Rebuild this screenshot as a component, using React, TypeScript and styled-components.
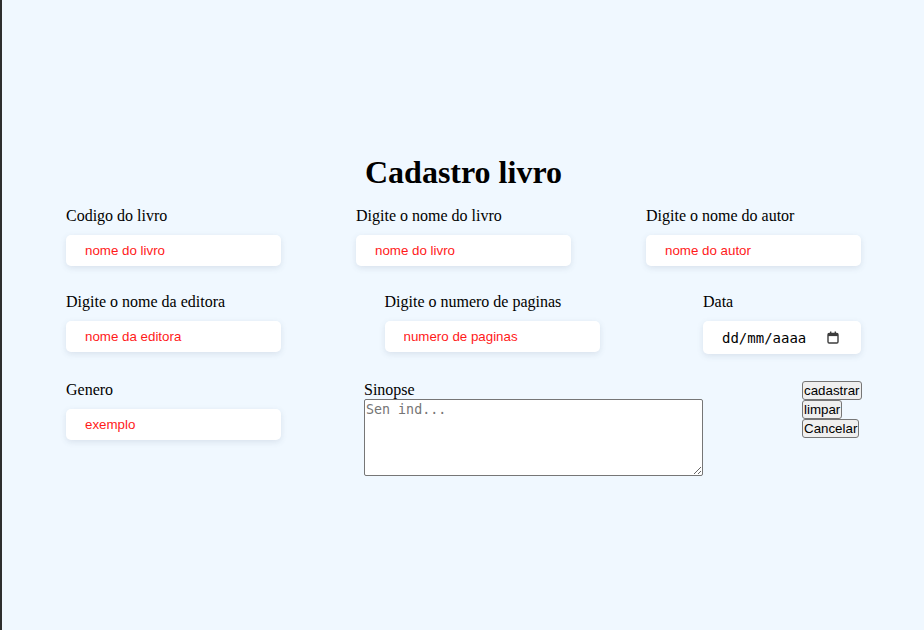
import styled, { createGlobalStyle } from 'styled-components';

const GlobalStyle = createGlobalStyle`
  html, body {
    margin: 0;
    padding: 0;
    background-color: #f0f8ff;
  }
`;

// Page wrapper with the dark window edge on the left
const Page = styled.div`
  min-height: 100vh;
  border-left: 2px solid #2e2e2e;
  box-sizing: border-box;
  padding-top: 154px;
  font-family: "Liberation Serif", "Times New Roman", serif;
  color: #000;
`;

const Form = styled.form`
  width: 795px;
  margin-left: 64px;
  display: flex;
  flex-direction: column;
  gap: 26px;
`;

const Title = styled.h1`
  margin: 0 0 -11px;
  text-align: center;
  font-size: 32px;
  line-height: 37px;
  font-weight: bold;
`;

const Row = styled.div`
  display: flex;
  justify-content: space-between;
  align-items: flex-start;
`;

const Field = styled.div<{ $width?: number }>`
  display: flex;
  flex-direction: column;
  width: ${(p) => p.$width ?? 215}px;
`;

const Label = styled.label<{ $gap?: number }>`
  font-size: 16px;
  line-height: 18px;
  padding-top: 1px;
  margin-bottom: ${(p) => p.$gap ?? 10}px;
  white-space: nowrap;
`;

// Styled text input
const TextInput = styled.input`
  box-sizing: border-box;
  width: 100%;
  height: 31px;
  border: none;
  border-radius: 5px;
  background: #fff;
  box-shadow: 0 2px 6px rgba(70, 90, 120, 0.14);
  padding: 0 19px;
  font-family: "Liberation Sans", Arial, sans-serif;
  font-size: 13.33px;
  color: #000;
  outline: none;

  &::placeholder {
    color: #ff1a1a;
  }
`;

// Fake date field so it reads dd/mm/aaaa whatever the locale
const DateBox = styled.div`
  box-sizing: border-box;
  width: 158px;
  height: 33px;
  border-radius: 5px;
  background: #fff;
  box-shadow: 0 2px 6px rgba(70, 90, 120, 0.14);
  display: flex;
  align-items: center;
  justify-content: space-between;
  padding: 0 22px 0 19px;
  font-family: "DejaVu Sans Mono", "Liberation Mono", monospace;
  font-size: 14px;
  color: #000;
`;

const TextArea = styled.textarea`
  box-sizing: border-box;
  width: 339px;
  height: 77px;
  border: 1px solid #767676;
  border-radius: 2px;
  background: #fff;
  padding: 2px 1px;
  font-family: "DejaVu Sans Mono", monospace;
  font-size: 13.33px;

  &::placeholder {
    color: #757575;
  }
`;

const Buttons = styled.div`
  display: flex;
  flex-direction: column;
  align-items: flex-start;
  width: 59px;
  padding-top: 1px;
`;

const Button = styled.button`
  box-sizing: border-box;
  height: 19px;
  padding: 0 1px;
  border: 1px solid #767676;
  border-radius: 3px;
  background: #efefef;
  font-family: "Liberation Sans", Arial, sans-serif;
  font-size: 13.33px;
  line-height: 15px;
  color: #000;
  white-space: nowrap;
`;

function CalendarIcon() {
  return (
    <svg width="12" height="13" viewBox="0 0 12 13">
      <rect x="1" y="2.5" width="10" height="9.5" rx="1.2" fill="none" stroke="#3c3c3c" strokeWidth="1.4" />
      <rect x="1" y="2.5" width="10" height="2.6" fill="#3c3c3c" />
      <rect x="3" y="0.5" width="1.4" height="2.5" fill="#3c3c3c" />
      <rect x="7.6" y="0.5" width="1.4" height="2.5" fill="#3c3c3c" />
    </svg>
  );
}

export default function App() {
  return (
    <Page>
      <GlobalStyle />
      <Form onSubmit={(e) => e.preventDefault()}>
        <Title>Cadastro livro</Title>
        <Row>
          <Field>
            <Label>Codigo do livro</Label>
            <TextInput placeholder="nome do livro" />
          </Field>
          <Field>
            <Label>Digite o nome do livro</Label>
            <TextInput placeholder="nome do livro" />
          </Field>
          <Field>
            <Label>Digite o nome do autor</Label>
            <TextInput placeholder="nome do autor" />
          </Field>
        </Row>
        <Row>
          <Field>
            <Label>Digite o nome da editora</Label>
            <TextInput placeholder="nome da editora" />
          </Field>
          <Field>
            <Label>Digite o numero de paginas</Label>
            <TextInput placeholder="numero de paginas" />
          </Field>
          <Field $width={158}>
            <Label>Data</Label>
            <DateBox>
              <span>dd/mm/aaaa</span>
              <CalendarIcon />
            </DateBox>
          </Field>
        </Row>
        <Row>
          <Field>
            <Label>Genero</Label>
            <TextInput placeholder="exemplo" />
          </Field>
          <Field $width={355}>
            <Label $gap={0}>Sinopse</Label>
            <TextArea placeholder="Sen ind..." />
          </Field>
          <Buttons>
            <Button type="submit">cadastrar</Button>
            <Button type="reset">limpar</Button>
            <Button type="button">Cancelar</Button>
          </Buttons>
        </Row>
      </Form>
    </Page>
  );
}
